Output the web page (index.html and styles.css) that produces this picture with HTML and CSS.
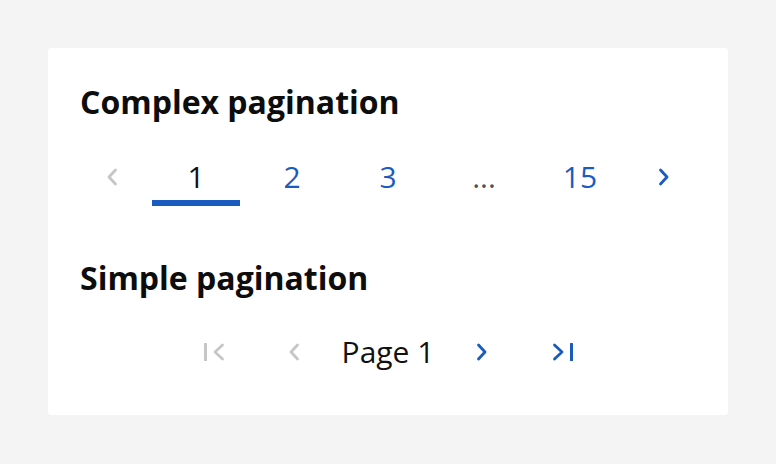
FILE: index.html
```html
<!DOCTYPE html>
<html lang="en">
<head>
<meta charset="utf-8">
<title>Pagination</title>
<link rel="stylesheet" href="styles.css">
</head>
<body>
<main class="card">
  <section class="section">
    <h2 class="title">Complex pagination</h2>
    <nav class="pager complex" aria-label="Complex pagination">
      <span class="cell nav disabled" aria-label="Previous page">
        <svg width="12" height="18" viewBox="0 0 12 18"><path d="M9.5 2 L3 9 L9.5 16" fill="none" stroke="currentColor" stroke-width="2.8" stroke-linecap="round" stroke-linejoin="round"/></svg>
      </span>
      <span class="cell num current">1</span>
      <span class="cell num link">2</span>
      <span class="cell num link">3</span>
      <span class="cell num gap">...</span>
      <span class="cell num link">15</span>
      <span class="cell nav link" aria-label="Next page">
        <svg width="12" height="18" viewBox="0 0 12 18"><path d="M2.5 2 L9 9 L2.5 16" fill="none" stroke="currentColor" stroke-width="2.8" stroke-linecap="round" stroke-linejoin="round"/></svg>
      </span>
    </nav>
  </section>
  <section class="section second">
    <h2 class="title">Simple pagination</h2>
    <nav class="pager simple" aria-label="Simple pagination">
      <span class="cell icon disabled" aria-label="First page">
        <svg width="21" height="20" viewBox="0 0 21 20"><rect x="0" y="1" width="3" height="18" rx="0.5" fill="currentColor"/><path d="M18.5 3 L11 10 L18.5 17" fill="none" stroke="currentColor" stroke-width="2.8" stroke-linecap="round" stroke-linejoin="round"/></svg>
      </span>
      <span class="cell icon disabled" aria-label="Previous page">
        <svg width="12" height="18" viewBox="0 0 12 18"><path d="M9.5 2 L3 9 L9.5 16" fill="none" stroke="currentColor" stroke-width="2.8" stroke-linecap="round" stroke-linejoin="round"/></svg>
      </span>
      <span class="cell label">Page 1</span>
      <span class="cell icon link" aria-label="Next page">
        <svg width="12" height="18" viewBox="0 0 12 18"><path d="M2.5 2 L9 9 L2.5 16" fill="none" stroke="currentColor" stroke-width="2.8" stroke-linecap="round" stroke-linejoin="round"/></svg>
      </span>
      <span class="cell icon link" aria-label="Last page">
        <svg width="21" height="20" viewBox="0 0 21 20"><path d="M2.5 3 L10 10 L2.5 17" fill="none" stroke="currentColor" stroke-width="2.8" stroke-linecap="round" stroke-linejoin="round"/><rect x="18" y="1" width="3" height="18" rx="0.5" fill="currentColor"/></svg>
      </span>
    </nav>
  </section>
</main>
</body>
</html>
```

FILE: styles.css
```css
html, body {
  margin: 0;
  padding: 0;
}

body {
  background: #f4f4f4;
  padding: 48px;
  font-family: "Open Sans", "Noto Sans", "Liberation Sans", sans-serif;
  color: #161616;
}

.card {
  background: #ffffff;
  border-radius: 4px;
  padding: 32px 32px 34px;
}

.title {
  margin: 0;
  font-size: 32px;
  line-height: 44px;
  font-weight: 700;
  color: #0d0d0d;
}

.second {
  margin-top: 50px;
}

.pager {
  display: flex;
  gap: 8px;
  margin-top: 34px;
}

.simple {
  justify-content: center;
  margin-top: 33px;
}

.cell {
  box-sizing: border-box;
  height: 48px;
  line-height: 38px;
  padding-bottom: 4px;
  border-bottom: 6px solid transparent;
  font-size: 30px;
  font-weight: 400;
  text-align: center;
  display: flex;
  align-items: center;
  justify-content: center;
}

.num {
  width: 88px;
}

.nav {
  width: 64px;
}

.icon {
  width: 72px;
}

.label {
  width: 100px;
  color: #111111;
}

.current {
  color: #111111;
  border-bottom-color: #1a5bbf;
}

.link {
  color: #1a5bbf;
}

.disabled {
  color: #c6c6c6;
}

.gap {
  color: #525252;
}
```
